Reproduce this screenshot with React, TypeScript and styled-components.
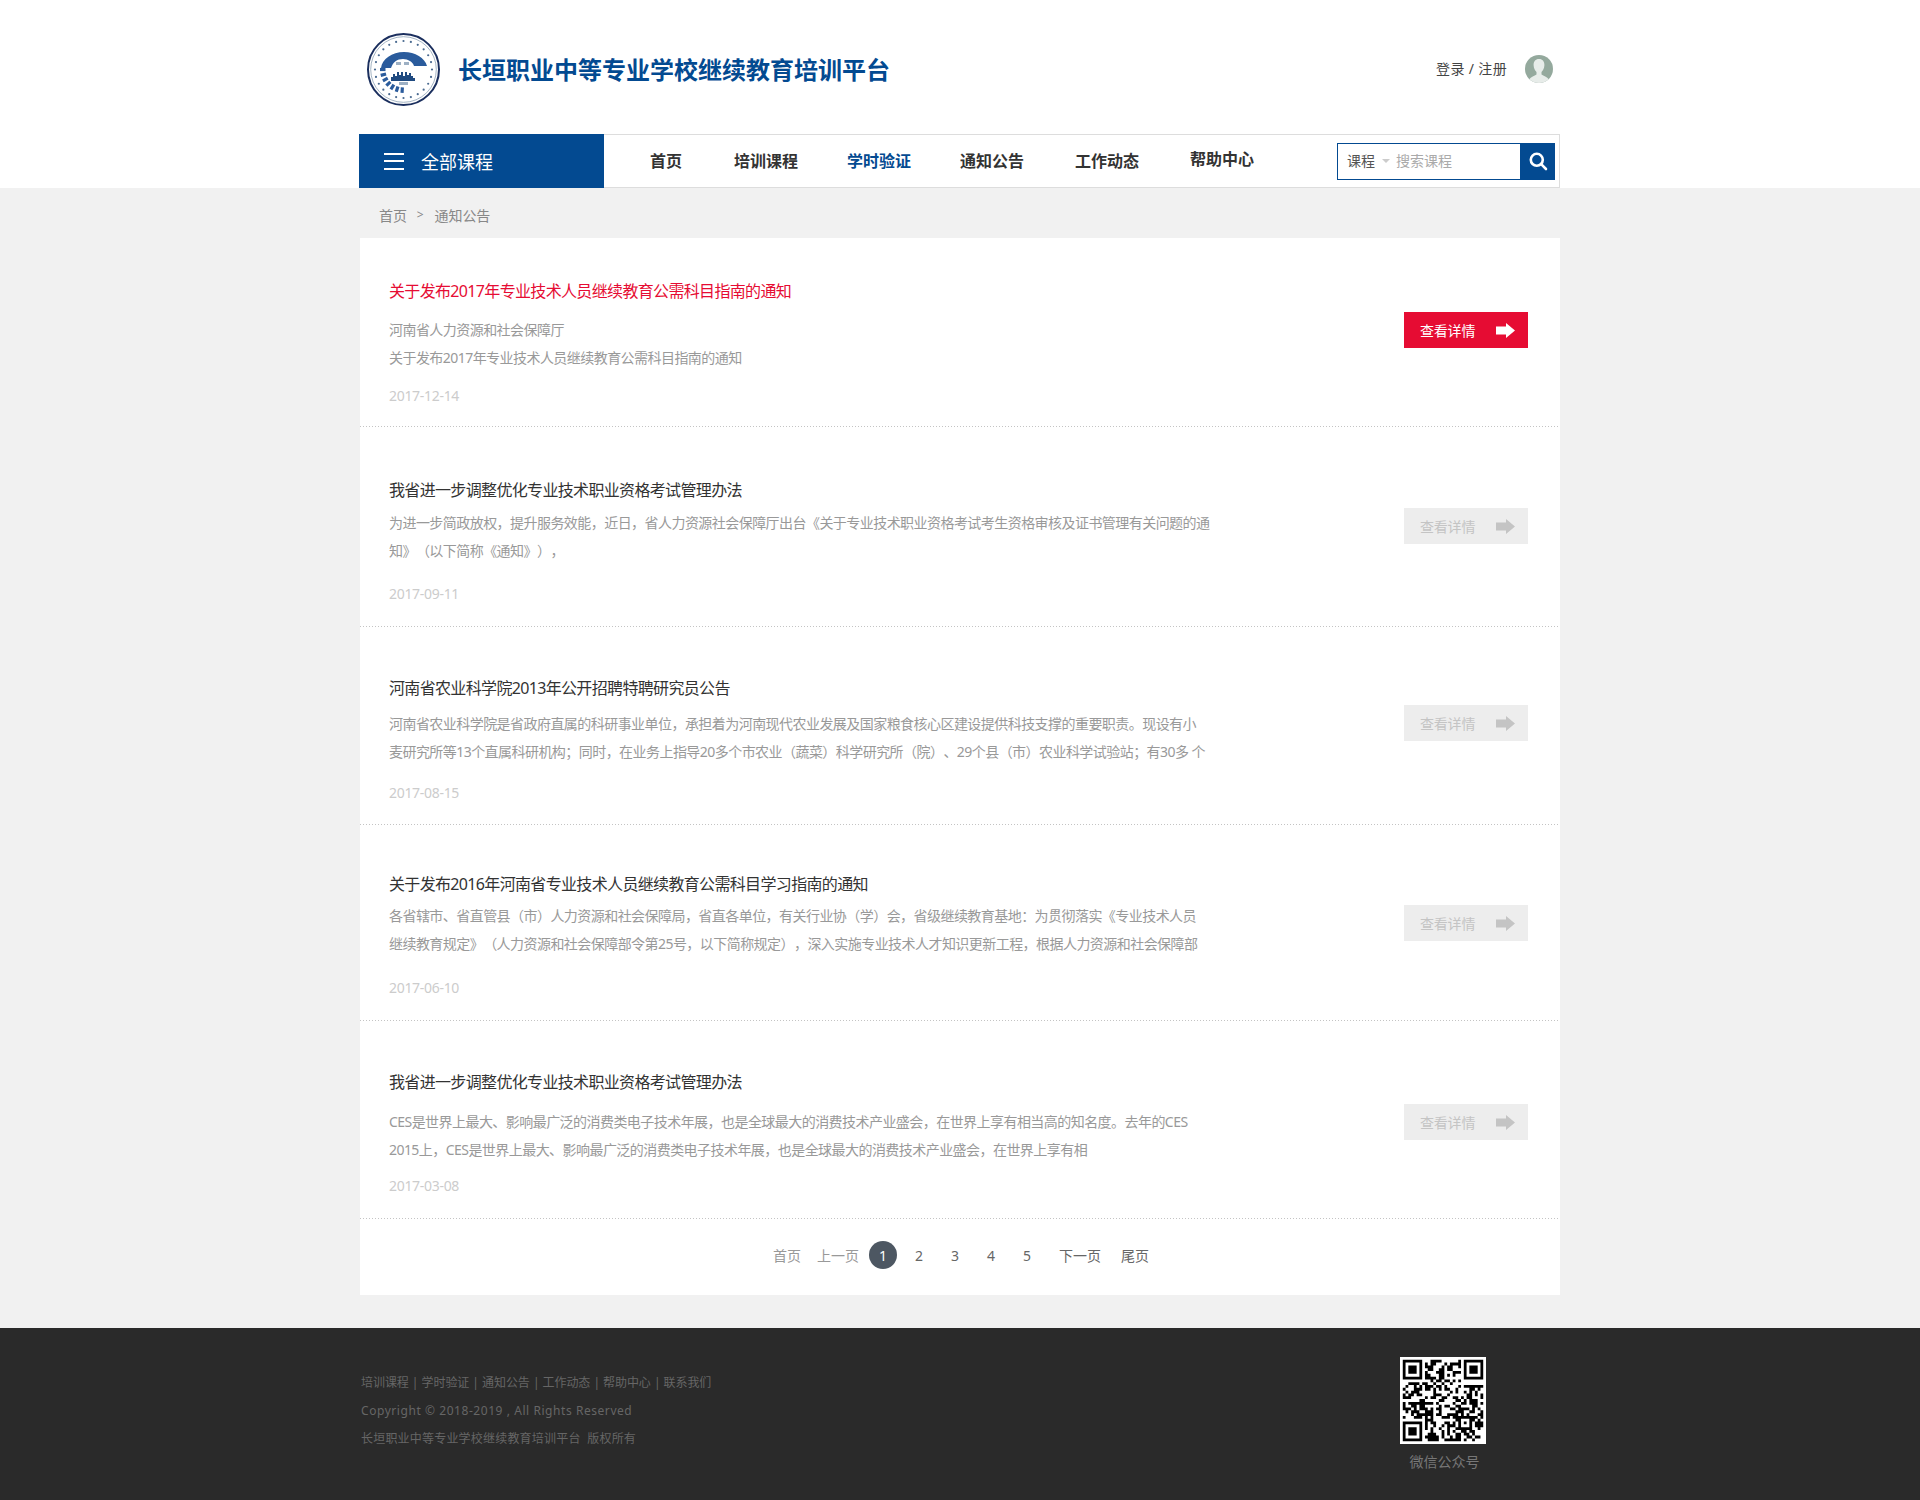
import React from "react";
import styled, { createGlobalStyle } from "styled-components";

const FONT = `"Noto Sans", "Noto Sans CJK SC", "Liberation Sans", sans-serif`;
const BLUE = "#034a91";

const Global = createGlobalStyle`
  html, body { margin: 0; padding: 0; background: #fff; }
  body { font-family: ${FONT}; color: #333; text-spacing-trim: space-all; }
  * { box-sizing: border-box; }
`;

const Page = styled.div`
  width: 1920px;
  height: 1500px;
  display: flex;
  flex-direction: column;
  overflow: hidden;
`;
const Wrap = styled.div`
  width: 1200px;
  margin: 0 auto;
  flex: none;
`;
const Header = styled(Wrap)`
  height: 134px;
  display: flex;
  align-items: center;
  padding: 5px 7px 0 7px;
`;
const LogoMark = styled.svg`
  width: 73px;
  height: 73px;
  flex: none;
`;
const SiteTitle = styled.h1`
  margin: 0 0 0 18px;
  font-size: 24px;
  line-height: 32px;
  font-weight: 700;
  color: ${BLUE};
  white-space: nowrap;
`;
const Account = styled.div`
  margin-left: auto;
  display: flex;
  align-items: center;
  gap: 18px;
  margin-top: -2px;
`;
const LoginLink = styled.a`
  font-size: 14px;
  line-height: 20px;
  color: #444;
  letter-spacing: 0.35px;
`;
const AvatarMark = styled.svg`
  width: 28px;
  height: 28px;
  display: block;
`;

const NavBar = styled(Wrap)`
  height: 54px;
  display: flex;
  align-items: center;
  border-top: 1px solid #ddd;
  border-bottom: 1px solid #ddd;
  border-right: 1px solid #ddd;
  background: #fff;
`;
const AllCourses = styled.div`
  width: 245px;
  height: 54px;
  margin: -1px 0 -1px -1px;
  background: ${BLUE};
  display: flex;
  align-items: center;
  padding-left: 25px;
  color: #fff;
  font-size: 18px;
  flex: none;
`;
const Burger = styled.span`
  width: 20px;
  height: 17px;
  border-top: 2px solid #fff;
  border-bottom: 2px solid #fff;
  margin-right: 17px;
  position: relative;
  &::after {
    content: "";
    position: absolute;
    left: 0;
    right: 0;
    top: 5.5px;
    height: 2px;
    background: #fff;
  }
`;
const NavLink = styled.a<{ $ml: number; $active?: boolean; $raise?: number }>`
  margin-left: ${(p) => p.$ml}px;
  padding-bottom: ${(p) => p.$raise ?? 0}px;
  font-size: 16px;
  font-weight: 700;
  line-height: 24px;
  white-space: nowrap;
  color: ${(p) => (p.$active ? BLUE : "#333")};
`;
const SearchBox = styled.div`
  margin-left: auto;
  margin-right: 4px;
  width: 218px;
  height: 37px;
  display: flex;
  border: 1px solid ${BLUE};
  background: #fff;
`;
const SearchScope = styled.span`
  padding-left: 9px;
  font-size: 14px;
  line-height: 34px;
  color: #555;
`;
const Caret = styled.span`
  width: 0;
  height: 0;
  margin: 15px 6px 0 7px;
  border: 4px solid transparent;
  border-top: 4px solid #ccc;
`;
const SearchHint = styled.span`
  font-size: 14px;
  line-height: 34px;
  color: #aaa;
`;
const SearchButton = styled.button`
  margin: -1px -1px -1px auto;
  width: 35px;
  border: 0;
  padding: 0;
  background: ${BLUE};
  display: flex;
  align-items: center;
  justify-content: center;
`;

const Main = styled.main`
  flex: none;
  background: #f1f1f1;
  padding-bottom: 33px;
`;
const Crumbs = styled(Wrap)`
  height: 50px;
  display: flex;
  align-items: center;
  padding: 3px 0 0 19px;
  font-size: 14px;
  color: #888;
  letter-spacing: -0.1px;
`;
const CrumbSep = styled.span`
  margin: 0 11px 0 10px;
  font-size: 12px;
`;
const Panel = styled(Wrap)`
  background: #fff;
  height: 1057px;
`;
const Row = styled.article<{ $h: number; $top: number }>`
  height: ${(p) => p.$h}px;
  padding: ${(p) => p.$top}px 32px 0 29px;
  background: repeating-linear-gradient(90deg, #c4c4c4 0 1px, transparent 1px 3px) left bottom / 100% 1px no-repeat;
  display: flex;
  justify-content: space-between;
`;
const RowBody = styled.div`
  min-width: 0;
`;
const RowTitle = styled.h3<{ $hot?: boolean }>`
  margin: 0;
  font-size: 16px;
  line-height: 28px;
  font-weight: 400;
  letter-spacing: -0.66px;
  white-space: nowrap;
  color: ${(p) => (p.$hot ? "#e60c33" : "#333")};
`;
const RowText = styled.p<{ $gap: number }>`
  margin: ${(p) => p.$gap}px 0 0;
  font-size: 14px;
  line-height: 28px;
  letter-spacing: -0.55px;
  color: #999;
  white-space: pre;
`;
const RowDate = styled.time<{ $gap: number }>`
  display: block;
  margin-top: ${(p) => p.$gap}px;
  font-size: 14px;
  line-height: 28px;
  letter-spacing: -0.3px;
  color: #ccc;
`;
const DetailButton = styled.a<{ $hot?: boolean; $offset: number }>`
  flex: none;
  width: 124px;
  height: 36px;
  margin-top: ${(p) => p.$offset}px;
  padding: 0 13px 0 16px;
  display: flex;
  align-items: center;
  justify-content: space-between;
  font-size: 14px;
  letter-spacing: -0.2px;
  background: ${(p) => (p.$hot ? "#e60c33" : "#ededed")};
  color: ${(p) => (p.$hot ? "#fff" : "#c4c4c4")};
`;
const Pager = styled.nav`
  display: flex;
  align-items: center;
  height: 28px;
  margin-top: 22px;
  padding-left: 413px;
  font-size: 14px;
  color: #666;
`;
const PageLink = styled.a<{ $ml: number; $muted?: boolean }>`
  margin-left: ${(p) => p.$ml}px;
  white-space: nowrap;
  color: ${(p) => (p.$muted ? "#999" : "#666")};
`;
const PageNum = styled.a<{ $current?: boolean }>`
  width: 28px;
  height: 28px;
  margin-left: ${(p) => (p.$current ? 10 : 8)}px;
  border-radius: 50%;
  display: flex;
  align-items: center;
  justify-content: center;
  background: ${(p) => (p.$current ? "#4d5762" : "transparent")};
  color: ${(p) => (p.$current ? "#fff" : "#666")};
`;

const Footer = styled.footer`
  flex: none;
  height: 172px;
  background: #2a2a2a;
`;
const FooterInner = styled(Wrap)`
  display: flex;
  justify-content: space-between;
  padding: 0 74px 0 1px;
`;
const FooterInfo = styled.div`
  padding-top: 41px;
`;
const FooterLine = styled.div<{ $ls: number }>`
  font-size: 12px;
  line-height: 28px;
  color: #666;
  letter-spacing: ${(p) => p.$ls}px;
  white-space: pre;
`;
const QrBlock = styled.div`
  padding-top: 29px;
  width: 86px;
  display: flex;
  flex-direction: column;
  align-items: center;
`;
const QrCode = styled.svg`
  width: 86px;
  height: 87px;
  display: block;
`;
const QrCaption = styled.div`
  margin-top: 8px;
  font-size: 14px;
  line-height: 20px;
  color: #777;
  white-space: nowrap;
  padding-left: 3px;
`;

const qrPath = (() => {
  const n = 29;
  const grid: boolean[][] = Array.from({ length: n }, () => Array(n).fill(false));
  let seed = 20171214;
  const rnd = () => {
    seed = (seed * 1664525 + 1013904223) >>> 0;
    return seed / 4294967296;
  };
  for (let y = 0; y < n; y++) for (let x = 0; x < n; x++) grid[y][x] = rnd() > 0.5;
  const clear = (x0: number, y0: number, s: number) => {
    for (let y = y0; y < y0 + s; y++)
      for (let x = x0; x < x0 + s; x++) if (grid[y] && x >= 0 && x < n) grid[y][x] = false;
  };
  const finder = (x0: number, y0: number) => {
    for (let y = 0; y < 7; y++)
      for (let x = 0; x < 7; x++) {
        const edge = x === 0 || y === 0 || x === 6 || y === 6;
        const core = x >= 2 && x <= 4 && y >= 2 && y <= 4;
        grid[y0 + y][x0 + x] = edge || core;
      }
  };
  clear(0, 0, 8);
  clear(21, 0, 8);
  clear(0, 21, 8);
  finder(0, 0);
  finder(22, 0);
  finder(0, 22);
  for (let y = 0; y < 5; y++)
    for (let x = 0; x < 5; x++) {
      const edge = x === 0 || y === 0 || x === 4 || y === 4;
      grid[20 + y][20 + x] = edge || (x === 2 && y === 2);
    }
  let d = "";
  grid.forEach((r, y) =>
    r.forEach((on, x) => {
      if (on) d += `M${x} ${y}h1v1h-1z`;
    })
  );
  return d;
})();

const Logo = () => {
  const ticks = Array.from({ length: 24 }, (_, i) => (i / 24) * Math.PI * 2);
  const steps = Array.from({ length: 7 }, (_, i) => Math.PI * (0.52 + i * 0.08));
  return (
    <LogoMark viewBox="0 0 73 73" aria-label="校徽">
      <circle cx="36.5" cy="36.5" r="35.5" fill="#fff" stroke="#1b2f5e" strokeWidth="2" />
      <circle cx="36.5" cy="36.5" r="32.8" fill="none" stroke="#8ea2b5" strokeWidth="0.8" />
      {ticks.map((a, i) => (
        <circle
          key={i}
          cx={36.5 + 28.5 * Math.cos(a)}
          cy={36.5 + 28.5 * Math.sin(a)}
          r="1.1"
          fill="#4a6a90"
        />
      ))}
      {steps.map((a, i) => (
        <line
          key={i}
          x1={36.5 + 18 * Math.cos(a)}
          y1={36.5 + 18 * Math.sin(a)}
          x2={36.5 + 23.5 * Math.cos(a)}
          y2={36.5 + 23.5 * Math.sin(a)}
          stroke="#2a5b9c"
          strokeWidth="3.2"
        />
      ))}
      <path
        d="M14 35C15 26 25 19 37 19C48 19 58 25 60 33H47C46 29 41 26 36 26C30 26 26 29 24 35Z"
        fill="#2a5b9c"
      />
      <path d="M24 47v-3h2v-3h2v2h2v-4h2v3h2v-3h2v4h2v-4h2v3h2v-2h2v3h2v2h2v3H24Z" fill="#1f4a80" />
      <rect x="29" y="29" width="5" height="3" fill="#9db0c4" />
      <rect x="37" y="29" width="5" height="3" fill="#9db0c4" />
      <rect x="32" y="49" width="9" height="3" fill="#9db0c4" />
    </LogoMark>
  );
};

const Avatar = () => (
  <AvatarMark viewBox="0 0 28 28">
    <defs>
      <clipPath id="av">
        <ellipse cx="14" cy="14" rx="14" ry="14" />
      </clipPath>
    </defs>
    <g clipPath="url(#av)">
      <rect width="28" height="28" fill="#94a99d" />
      <path
        d="M14 4c-3.6 0-5.6 2.6-5.4 6.2.2 3 1.4 5.400 2.900 6.800v2.400C9.500 20.600 6 21.600 4 24.500V28h20v-3.500c-2-2.900-5.500-3.900-7.500-5.100V17c1.500-1.400 2.700-3.800 2.900-6.800C19.600 6.600 17.600 4 14 4Z"
        fill="#e7ece9"
      />
    </g>
  </AvatarMark>
);

const Arrow = ({ color }: { color: string }) => (
  <svg width="19" height="15" viewBox="0 0 19 15">
    <path d="M0 3.500H10V0L19 7.500L10 15V11.500H0Z" fill={color} />
  </svg>
);

const rows = [
  {
    h: 189, top: 39, gapText: 11, gapDate: 10, btn: 35, hot: true,
    title: "关于发布2017年专业技术人员继续教育公需科目指南的通知",
    text: ["河南省人力资源和社会保障厅", "关于发布2017年专业技术人员继续教育公需科目指南的通知"],
    date: "2017-12-14",
  },
  {
    h: 200, top: 49, gapText: 5, gapDate: 15, btn: 32,
    title: "我省进一步调整优化专业技术职业资格考试管理办法",
    text: ["为进一步简政放权，提升服务效能，近日，省人力资源社会保障厅出台《关于专业技术职业资格考试考生资格审核及证书管理有关问题的通", "知》（以下简称《通知》），"],
    date: "2017-09-11",
  },
  {
    h: 198, top: 47, gapText: 8, gapDate: 13, btn: 31,
    title: "河南省农业科学院2013年公开招聘特聘研究员公告",
    text: ["河南省农业科学院是省政府直属的科研事业单位，承担着为河南现代农业发展及国家粮食核心区建设提供科技支撑的重要职责。现设有小", "麦研究所等13个直属科研机构；同时，在业务上指导20多个市农业（蔬菜）科学研究所（院）、29个县（市）农业科学试验站；有30多 个"],
    date: "2017-08-15",
  },
  {
    h: 196, top: 45, gapText: 4, gapDate: 16, btn: 35,
    title: "关于发布2016年河南省专业技术人员继续教育公需科目学习指南的通知",
    text: ["各省辖市、省直管县（市）人力资源和社会保障局，省直各单位，有关行业协（学）会，省级继续教育基地：为贯彻落实《专业技术人员", "继续教育规定》（人力资源和社会保障部令第25号，以下简称规定），深入实施专业技术人才知识更新工程，根据人力资源和社会保障部"],
    date: "2017-06-10",
  },
  {
    h: 198, top: 47, gapText: 12, gapDate: 8, btn: 36,
    title: "我省进一步调整优化专业技术职业资格考试管理办法",
    text: ["CES是世界上最大、影响最广泛的消费类电子技术年展，也是全球最大的消费技术产业盛会，在世界上享有相当高的知名度。去年的CES", "2015上，CES是世界上最大、影响最广泛的消费类电子技术年展，也是全球最大的消费技术产业盛会，在世界上享有相"],
    date: "2017-03-08",
  },
];

export default function App() {
  return (
    <Page>
      <Global />
      <Header>
        <Logo />
        <SiteTitle>长垣职业中等专业学校继续教育培训平台</SiteTitle>
        <Account>
          <LoginLink>登录 / 注册</LoginLink>
          <Avatar />
        </Account>
      </Header>
      <NavBar>
        <AllCourses>
          <Burger />
          全部课程
        </AllCourses>
        <NavLink $ml={46}>首页</NavLink>
        <NavLink $ml={52}>培训课程</NavLink>
        <NavLink $ml={49} $active>学时验证</NavLink>
        <NavLink $ml={49}>通知公告</NavLink>
        <NavLink $ml={51}>工作动态</NavLink>
        <NavLink $ml={51} $raise={5}>帮助中心</NavLink>
        <SearchBox>
          <SearchScope>课程</SearchScope>
          <Caret />
          <SearchHint>搜索课程</SearchHint>
          <SearchButton aria-label="搜索">
            <svg width="20" height="20" viewBox="0 0 20 20" fill="none" stroke="#fff" strokeWidth="2.600">
              <circle cx="8.800" cy="8.800" r="6" />
              <path d="M13.200 13.200L18 18" strokeLinecap="round" />
            </svg>
          </SearchButton>
        </SearchBox>
      </NavBar>
      <Main>
        <Crumbs>
          首页
          <CrumbSep>&gt;</CrumbSep>
          通知公告
        </Crumbs>
        <Panel>
          {rows.map((r) => (
            <Row key={r.date} $h={r.h} $top={r.top}>
              <RowBody>
                <RowTitle $hot={r.hot}>{r.title}</RowTitle>
                <RowText $gap={r.gapText}>{r.text.join("\n")}</RowText>
                <RowDate $gap={r.gapDate}>{r.date}</RowDate>
              </RowBody>
              <DetailButton $hot={r.hot} $offset={r.btn}>
                查看详情
                <Arrow color={r.hot ? "#fff" : "#c4c4c4"} />
              </DetailButton>
            </Row>
          ))}
          <Pager>
            <PageLink $ml={0} $muted>首页</PageLink>
            <PageLink $ml={16} $muted>上一页</PageLink>
            <PageNum $current>1</PageNum>
            <PageNum>2</PageNum>
            <PageNum>3</PageNum>
            <PageNum>4</PageNum>
            <PageNum>5</PageNum>
            <PageLink $ml={18}>下一页</PageLink>
            <PageLink $ml={20}>尾页</PageLink>
          </Pager>
        </Panel>
      </Main>
      <Footer>
        <FooterInner>
          <FooterInfo>
            <FooterLine $ls={-0.05}>培训课程 | 学时验证 | 通知公告 | 工作动态 | 帮助中心 | 联系我们</FooterLine>
            <FooterLine $ls={0.56}>Copyright © 2018-2019 , All Rights Reserved</FooterLine>
            <FooterLine $ls={0.2}>长垣职业中等专业学校继续教育培训平台  版权所有</FooterLine>
          </FooterInfo>
          <QrBlock>
            <QrCode viewBox="-1 -1 31 31" preserveAspectRatio="none">
              <rect x="-1" y="-1" width="31" height="31" fill="#fff" />
              <path d={qrPath} fill="#000" />
            </QrCode>
            <QrCaption>微信公众号</QrCaption>
          </QrBlock>
        </FooterInner>
      </Footer>
    </Page>
  );
}
